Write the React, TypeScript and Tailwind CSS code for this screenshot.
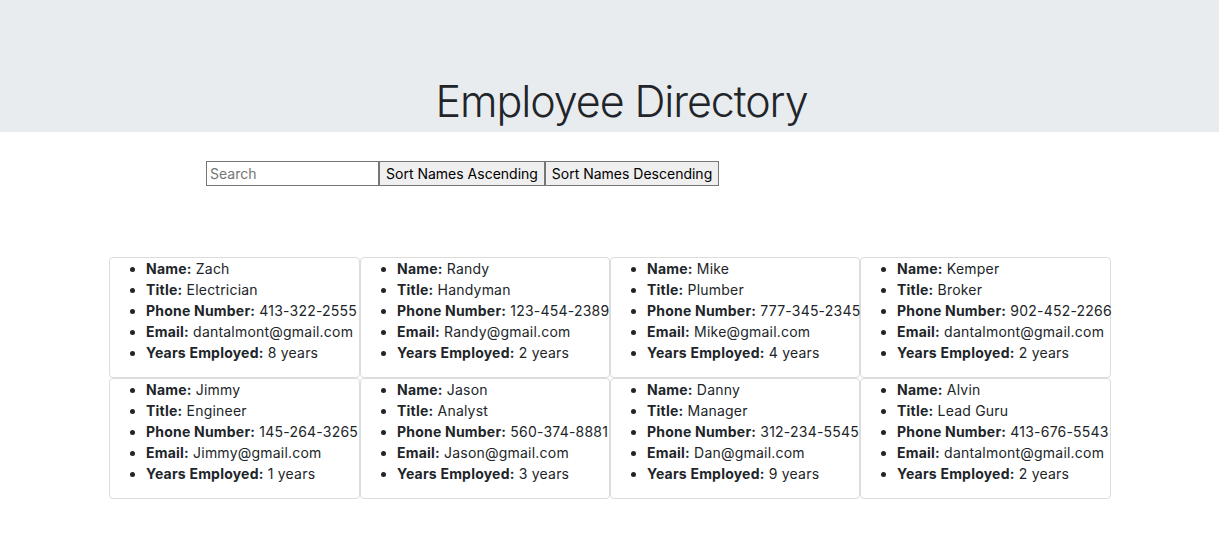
const employees = [
  { name: "Zach", title: "Electrician", phone: "413-322-2555", email: "dantalmont@gmail.com", years: 8 },
  { name: "Randy", title: "Handyman", phone: "123-454-2389", email: "Randy@gmail.com", years: 2 },
  { name: "Mike", title: "Plumber", phone: "777-345-2345", email: "Mike@gmail.com", years: 4 },
  { name: "Kemper", title: "Broker", phone: "902-452-2266", email: "dantalmont@gmail.com", years: 2 },
  { name: "Jimmy", title: "Engineer", phone: "145-264-3265", email: "Jimmy@gmail.com", years: 1 },
  { name: "Jason", title: "Analyst", phone: "560-374-8881", email: "Jason@gmail.com", years: 3 },
  { name: "Danny", title: "Manager", phone: "312-234-5545", email: "Dan@gmail.com", years: 9 },
  { name: "Alvin", title: "Lead Guru", phone: "413-676-5543", email: "dantalmont@gmail.com", years: 2 },
]

const Card = ({ e }: { e: typeof employees[number] }) => (
  <div className="border border-[#dcdcdc] rounded-[4px] h-[121px] pl-[24px]">
    <ul className="list-disc pl-[12px] text-[14px] leading-[21px] tracking-[0.015em] text-[#212529] whitespace-nowrap">
      <li><b>Name:</b> {e.name}</li>
      <li><b>Title:</b> {e.title}</li>
      <li><b>Phone Number:</b> {e.phone}</li>
      <li><b>Email:</b> {e.email}</li>
      <li><b>Years Employed:</b> {e.years} years</li>
    </ul>
  </div>
)

export default function App() {
  return (
    <div className="bg-white min-h-[549px] font-['Inter',sans-serif] text-[#212529]">
      <header className="bg-[#e9ecef] h-[132px] flex items-end justify-center pb-[4px]">
        <h1 className="text-[43px] font-light leading-[54px] tracking-[-0.025em] ml-[24px]">Employee Directory</h1>
      </header>
      <div className="flex ml-[206px] mt-[29px] h-[25px] text-[14px]">
        <input placeholder="Search" className="w-[173px] border border-[#767676] px-[3px] placeholder:text-[#757575] outline-none" />
        <button className="w-[166px] bg-[#efefef] border border-[#767676] text-black">Sort Names Ascending</button>
        <button className="w-[174px] bg-[#efefef] border border-[#767676] text-black">Sort Names Descending</button>
      </div>
      <div className="grid grid-cols-[251px_250px_250px_251px] ml-[109px] mt-[71px]">
        {employees.map(e => <Card key={e.name} e={e} />)}
      </div>
    </div>
  )
}
